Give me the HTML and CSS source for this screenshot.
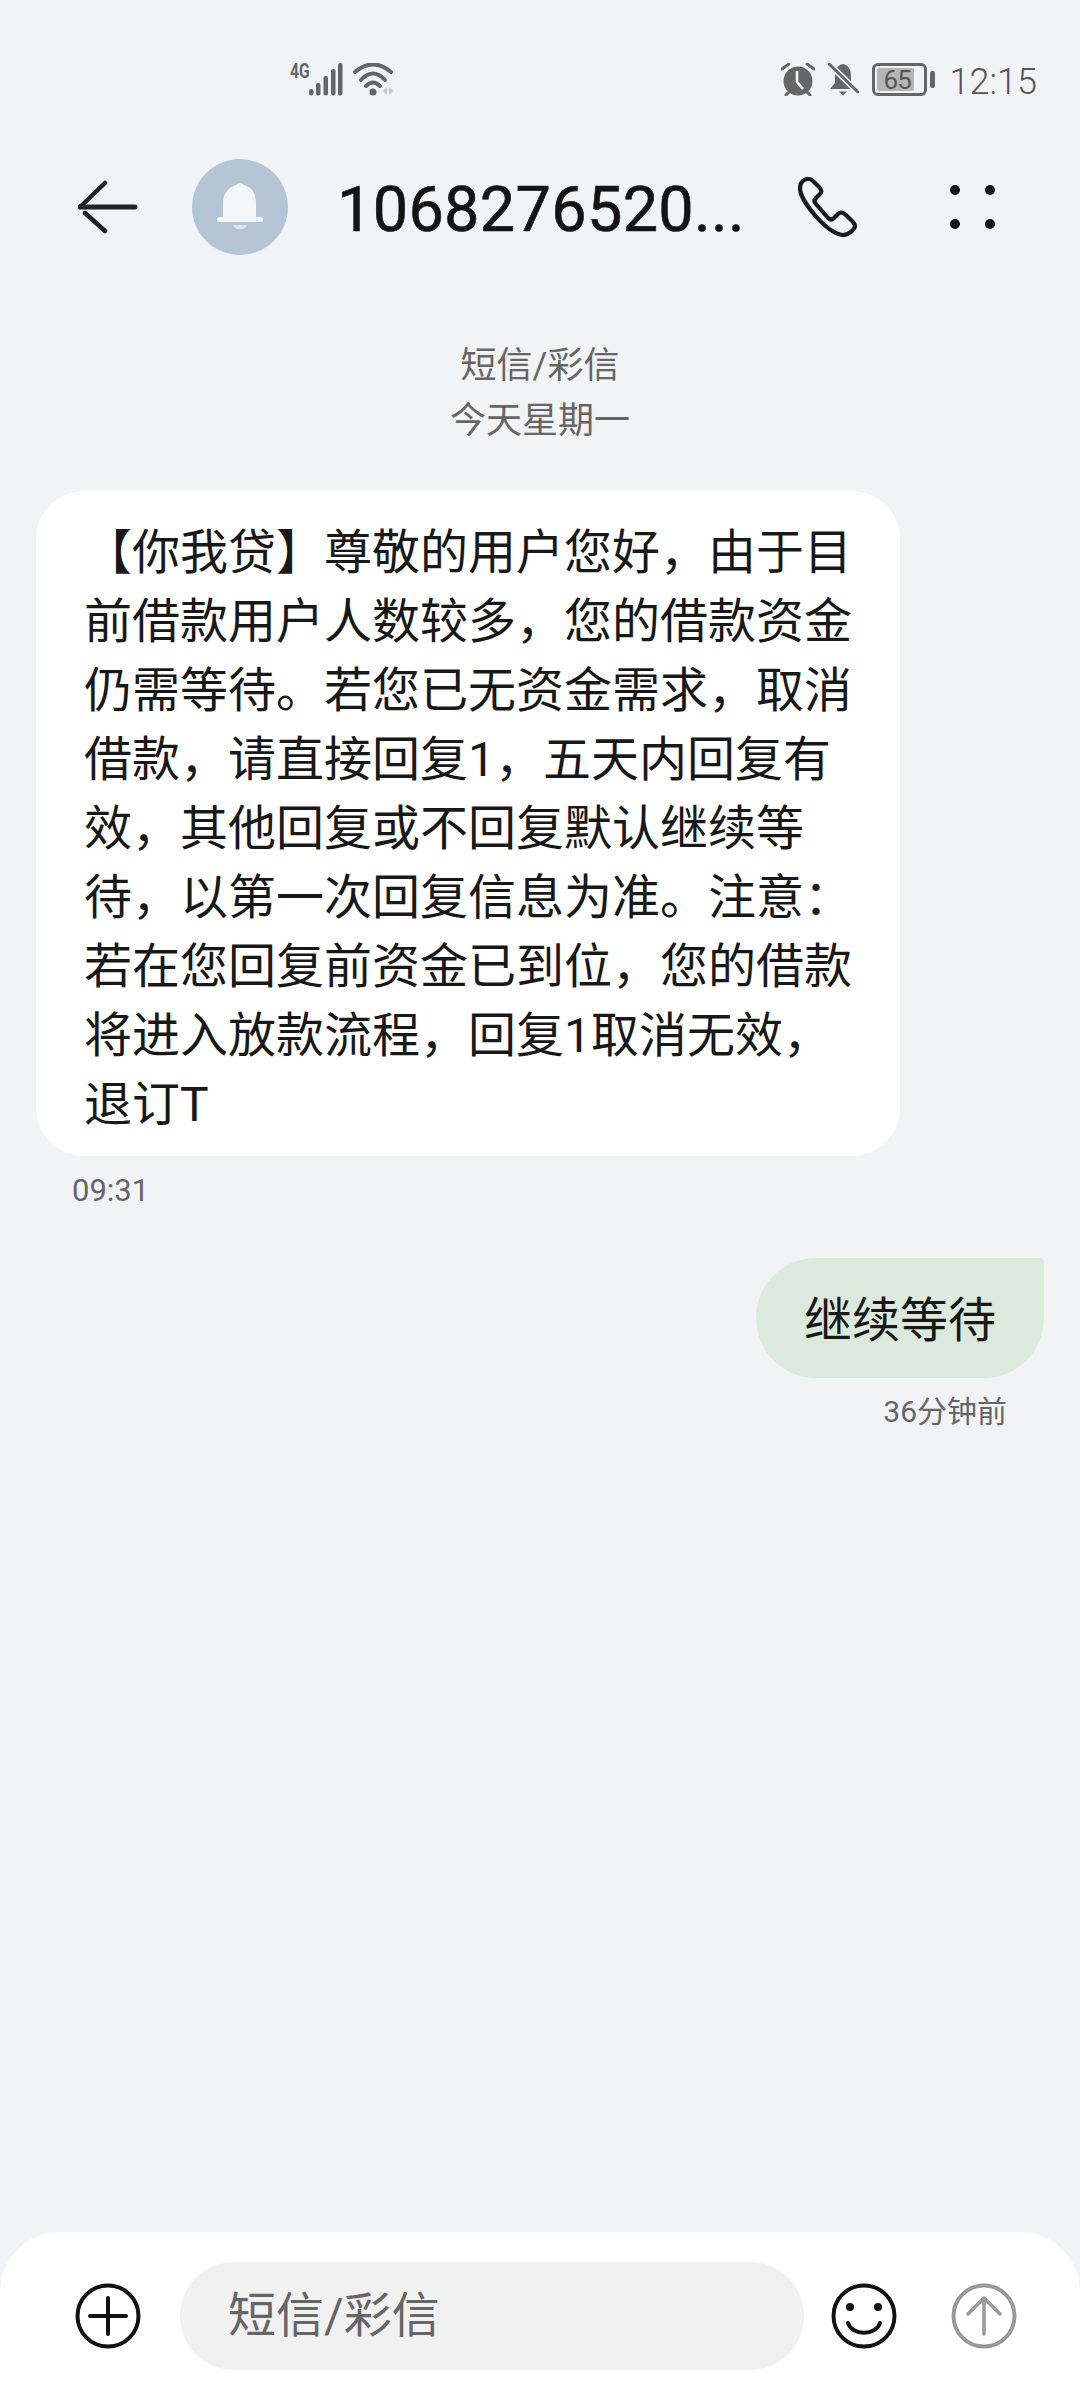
FILE: index.html
```html
<!DOCTYPE html>
<html lang="zh-CN">

<head>
    <meta charset="UTF-8">
    <meta name="viewport" content="width=device-width, initial-scale=1.0">
    <title>短信</title>
    <link rel="stylesheet" href="styles.css">
</head>

<body>
    <div class="status">
        <div class="status-left">
            <span class="net">4G</span>
            <svg class="signal" width="35" height="33" viewBox="0 0 35 33" fill="#666">
                <rect x="1" y="26" width="4.5" height="6.5" rx="2.2" />
                <rect x="8" y="20" width="4.5" height="12.5" rx="2" />
                <rect x="15.5" y="13" width="4.5" height="19.5" rx="2" />
                <rect x="23" y="6" width="4.5" height="26.5" rx="2" />
                <rect x="30" y="0" width="4.5" height="32.5" rx="2" />
            </svg>
            <svg class="wifi" width="42" height="33" viewBox="0 0 42 33" fill="none" stroke="#666" stroke-width="4" stroke-linecap="round">
                <path d="M2 9 Q20 -6 38 9" />
                <path d="M8 17 Q20 4 32 17" />
                <path d="M13 23 Q20 16 27 23" />
                <circle cx="20" cy="29" r="3.5" fill="#666" stroke="none" />
                <path d="M34 24 L30 28 L34 32 Z M36 24 L40 28 L36 32 Z" fill="#c4c4c4" stroke="none" />
            </svg>
        </div>
        <div class="status-right">
            <svg class="alarm" width="34" height="33" viewBox="0 0 34 33">
                <circle cx="17" cy="18" r="14.5" fill="#666" />
                <path d="M16 8 V19 L22 26" fill="none" stroke="#f2f3f5" stroke-width="2.6" />
                <path d="M1 6 L8 1 M33 6 L26 1 M5 32 L9 28 M29 32 L25 28" stroke="#666" stroke-width="3" stroke-linecap="round" />
            </svg>
            <svg class="bell-off" width="31" height="33" viewBox="0 0 31 33">
                <path d="M15 1 C10 2 7 6 7 13 V20 L2 26 H28 L23 20 V13 C23 6 20 2 15 1 Z" fill="#666" />
                <path d="M11 28.5 H19 L15 32.5 Z" fill="#666" />
                <path d="M1 1 L31 30" stroke="#f2f3f5" stroke-width="6" />
                <path d="M1 1 L30 29" stroke="#666" stroke-width="3" stroke-linecap="round" />
            </svg>
            <div class="battery">
                <div class="battery-body"><span class="battery-fill">65</span></div>
                <div class="battery-tip"></div>
            </div>
            <span class="clock">12:15</span>
        </div>
    </div>

    <div class="topbar">
        <svg class="back" width="60" height="54" viewBox="0 0 60 54" fill="none" stroke="#222" stroke-linecap="round" stroke-linejoin="round">
            <path d="M2 27 L27 3" stroke-width="4.5" />
            <path d="M7 33 L27 51" stroke-width="4.5" />
            <path d="M2 27 H57" stroke-width="5" />
        </svg>
        <div class="avatar">
            <svg width="46" height="48" viewBox="0 0 46 48" fill="#f5f6f8">
                <path d="M23 0 C25 0 26 1 27 2 C35 4 39 11 39 20 V35 H6 V20 C6 11 11 4 19 2 C20 1 21 0 23 0 Z" />
                <rect x="0" y="34" width="46" height="5" rx="2.5" />
                <path d="M16 42 H30 C28 48 18 48 16 42 Z" opacity=".6" />
            </svg>
        </div>
        <div class="title">1068276520...</div>
        <svg class="phone" width="60" height="60" viewBox="0 0 60 60" fill="none" stroke="#1c1c1c" stroke-width="4.2" stroke-linejoin="round">
            <path d="M10 2 C6 2 2 5 2 11 C2 25 30 57 45 58 C51 58 57 52 57 49 C57 46 55 45 52 42 L48 38 C45 35 42 35 40 37 L36 41 C34 43 32 43 30 41 L18 27 C16 25 16 23 18 21 L22 17 C24 15 24 13 21 10 L15 4 C13 2 12 2 10 2 Z" />
        </svg>
        <div class="more">
            <i></i><i></i><i></i><i></i>
        </div>
    </div>

    <div class="thread">
        <div class="thread-head">
            <div>短信/彩信</div>
            <div>今天星期一</div>
        </div>
        <div class="bubble in">【你我贷】尊敬的用户您好，由于目前借款用户人数较多，您的借款资金仍需等待。若您已无资金需求，取消借款，请直接回复1，五天内回复有效，其他回复或不回复默认继续等待，以第一次回复信息为准。注意：若在您回复前资金已到位，您的借款将进入放款流程，回复1取消无效，退订T</div>
        <div class="time">09:31</div>
        <div class="bubble out">继续等待</div>
        <div class="time time-out">36分钟前</div>
    </div>

    <div class="composer">
        <svg width="66" height="66" viewBox="0 0 66 66" fill="none" stroke="#111" stroke-linecap="round">
            <circle cx="33" cy="33" r="30.5" stroke-width="4" />
            <path d="M33 15 V51 M15 33 H51" stroke-width="4" />
        </svg>
        <div class="input">短信/彩信</div>
        <svg class="smile" width="66" height="66" viewBox="0 0 66 66" fill="none" stroke="#111" stroke-linecap="round">
            <circle cx="33" cy="33" r="30.5" stroke-width="4" />
            <circle cx="19" cy="24" r="4" fill="#111" stroke="none" />
            <circle cx="47" cy="24" r="4" fill="#111" stroke="none" />
            <path d="M17 40 C21 53 45 53 49 40" stroke-width="4" />
        </svg>
        <svg class="send" width="66" height="66" viewBox="0 0 66 66" fill="none" stroke="#999" stroke-linecap="round" stroke-linejoin="round">
            <circle cx="33" cy="33" r="30.5" stroke-width="4" />
            <path d="M33 51 V15 M17 31 L33 15 L49 31" stroke-width="3.5" />
        </svg>
    </div>
</body>

</html>
```

FILE: styles.css
```css
* {
    margin: 0;
    padding: 0;
    box-sizing: border-box;
}

body {
    width: 1080px;
    height: 2400px;
    background: #f2f3f5;
    font-family: "Roboto", "Noto Sans CJK SC", sans-serif;
    display: flex;
    flex-direction: column;
    overflow: hidden;
}

.status {
    height: 100px;
    padding: 63px 43px 0 290px;
    display: flex;
    justify-content: space-between;
    color: #666;
}

.status-left,
.status-right {
    display: flex;
    height: 33px;
}

.net {
    width: 18px;
    font-size: 20px;
    font-weight: 700;
    line-height: 16px;
    transform: scaleX(.78);
    transform-origin: left;
}

.signal {
    margin-right: 10px;
}

.alarm,
.bell-off {
    margin-right: 13px;
}

.battery {
    display: flex;
    align-items: center;
    gap: 3px;
    margin-right: 15px;
}

.battery-body {
    width: 55px;
    height: 33px;
    border: 3px solid #666;
    border-radius: 6px;
    padding: 2px;
}

.battery-fill {
    display: block;
    width: 37px;
    height: 23px;
    background: #b5b5b5;
    border-radius: 2px;
    font-size: 26px;
    line-height: 24px;
    padding-left: 7px;
    letter-spacing: -1px;
    color: #555;
    white-space: nowrap;
}

.battery-tip {
    width: 5px;
    height: 17px;
    background: #666;
    border-radius: 2px;
}

.clock {
    font-size: 36px;
    font-weight: 300;
    line-height: 38px;
    color: #555;
}

.topbar {
    height: 112px;
    margin-top: 51px;
    padding-left: 78px;
    display: flex;
    align-items: center;
}

.avatar {
    width: 96px;
    height: 96px;
    border-radius: 50%;
    background: #b5c5d5;
    margin-left: 54px;
    display: flex;
    align-items: center;
    justify-content: center;
}

.title {
    margin-left: 49px;
    padding-top: 5px;
    width: 412px;
    font-size: 63px;
    letter-spacing: .3px;
    -webkit-text-stroke: .6px #141414;
    color: #141414;
    white-space: nowrap;
}

.phone {
    margin-left: 49px;
}

.more {
    margin-left: 92px;
    width: 45px;
    display: grid;
    grid-template-columns: 10px 10px;
    justify-content: space-between;
    row-gap: 24px;
}

.more i {
    width: 10px;
    height: 10px;
    border-radius: 50%;
    background: #111;
}

.thread {
    flex: 1;
    display: flex;
    flex-direction: column;
}

.thread-head {
    margin-top: 76px;
    text-align: center;
    font-size: 36px;
    line-height: 55px;
    color: #666;
}

.bubble {
    font-size: 48px;
    line-height: 69px;
    color: #181818;
}

.bubble.in {
    width: 864px;
    margin: 42px 0 0 36px;
    padding: 27px 48px 17px;
    background: #fff;
    border-radius: 48px;
}

.bubble.out {
    align-self: flex-end;
    margin: 49px 36px 0 0;
    padding: 28px 48px 23px;
    background: #dce9dd;
    border-radius: 60px 4px 60px 60px;
}

.time {
    margin: 17px 0 0 72px;
    font-size: 31px;
    line-height: 36px;
    color: #666;
}

.time-out {
    align-self: flex-end;
    margin: 16px 73px 0 0;
    font-size: 30px;
}

.composer {
    height: 168px;
    padding: 0 63px 0 75px;
    background: #fff;
    border-radius: 60px 60px 0 0;
    display: flex;
    align-items: center;
}

.input {
    width: 624px;
    height: 108px;
    margin-left: 39px;
    padding-left: 48px;
    background: #f1f1f1;
    border-radius: 54px;
    font-size: 48px;
    line-height: 108px;
    color: #666;
}

.smile {
    margin-left: 27px;
}

.send {
    margin-left: 54px;
}
```
